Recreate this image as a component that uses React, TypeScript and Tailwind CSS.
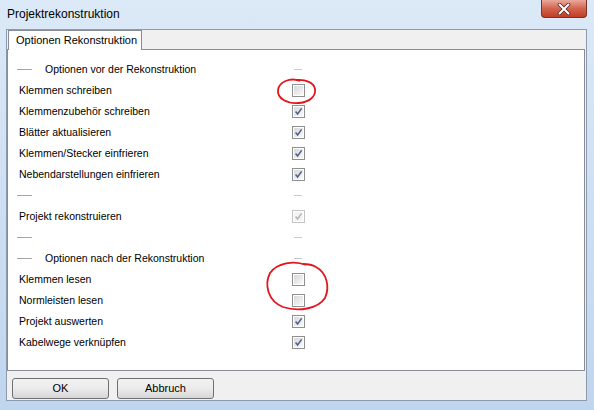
import React from "react";

type Row =
  | { kind: "check"; label: string; state: "off" | "on" | "disabled" }
  | { kind: "header"; label: string }
  | { kind: "sep" };

const rows: Row[] = [
  { kind: "header", label: "Optionen vor der Rekonstruktion" },
  { kind: "check", label: "Klemmen schreiben", state: "off" },
  { kind: "check", label: "Klemmenzubehör schreiben", state: "on" },
  { kind: "check", label: "Blätter aktualisieren", state: "on" },
  { kind: "check", label: "Klemmen/Stecker einfrieren", state: "on" },
  { kind: "check", label: "Nebendarstellungen einfrieren", state: "on" },
  { kind: "sep" },
  { kind: "check", label: "Projekt rekonstruieren", state: "disabled" },
  { kind: "sep" },
  { kind: "header", label: "Optionen nach der Rekonstruktion" },
  { kind: "check", label: "Klemmen lesen", state: "off" },
  { kind: "check", label: "Normleisten lesen", state: "off" },
  { kind: "check", label: "Projekt auswerten", state: "on" },
  { kind: "check", label: "Kabelwege verknüpfen", state: "on" },
];

function CheckBox({ state }: { state: "off" | "on" | "disabled" }) {
  const disabled = state === "disabled";
  return (
    <div
      className={`w-[13px] h-[13px] border ${disabled ? "border-[#c4c4c4]" : "border-[#8e8f8f]"} bg-white p-px`}
    >
      <div
        className={`relative w-full h-full ${disabled ? "bg-[#f4f4f4]" : "bg-gradient-to-br from-[#d8d8d8] to-[#f9f9f9]"}`}
      >
        {state !== "off" && (
          <svg viewBox="0 0 9 9" className="absolute inset-0 w-full h-full">
            <path
              d="M1.6 4.6 L3.6 7 L7.6 1.4"
              fill="none"
              stroke={disabled ? "#b4b4b4" : "#4c5f8c"}
              strokeWidth="1.5"
            />
          </svg>
        )}
      </div>
    </div>
  );
}

function OptionRow({ row }: { row: Row }) {
  if (row.kind === "check") {
    return (
      <div className="h-[21px] flex items-center">
        <span className="w-[284px] pl-[11px] text-black">{row.label}</span>
        <CheckBox state={row.state} />
      </div>
    );
  }
  return (
    <div className="h-[21px] flex items-center">
      <div className="w-[284px] pl-[9px] flex items-center">
        <span className="w-[15px] h-px bg-[#a6a6a6]" />
        {row.kind === "header" && <span className="ml-[13px] text-black">{row.label}</span>}
      </div>
      <span className="ml-[2px] w-[8px] h-px bg-[#c8c8c8]" />
    </div>
  );
}

export default function App() {
  return (
    <div
      className="relative w-[594px] h-[410px] overflow-hidden bg-gradient-to-b from-[#dce9f7] via-[#cddff3] to-[#c0d5ee] flex flex-col"
      style={{ fontFamily: '"Liberation Sans", Arial, sans-serif' }}
    >
      {/* title bar */}
      <div className="h-[29px] shrink-0 flex items-center pl-[7px] pb-[1px] text-[12px] text-black">
        Projektrekonstruktion
      </div>
      <div className="absolute top-0 right-[7px] w-[46px] h-[18px] rounded-b-[4px] border border-t-0 border-[#7a3327] bg-gradient-to-b from-[#e8a99c] via-[#d2634d] to-[#c23c22] flex items-center justify-center">
        <svg viewBox="0 0 14 12" className="w-[14px] h-[12px]">
          <path d="M2.5 1.5 L11.5 10.5 M11.5 1.5 L2.5 10.5" stroke="#5a2a22" strokeWidth="3.6" strokeLinecap="round" />
          <path d="M2.5 1.5 L11.5 10.5 M11.5 1.5 L2.5 10.5" stroke="#ffffff" strokeWidth="2" strokeLinecap="round" />
        </svg>
      </div>

      {/* client area */}
      <div className="ml-[6px] w-[581px] h-[372px] border border-[#8d9aab] bg-[#f0f0f0] flex flex-col text-[10.5px]">
        <div className="h-[19px] shrink-0 flex items-end pl-[1px]">
          <div className="relative z-10 w-[134px] h-[20px] -mb-px border border-b-0 border-[#898c95] bg-white pl-[7px] flex items-center text-black text-[11px]">
            Optionen Rekonstruktion
          </div>
        </div>
        <div className="w-[578px] h-[322px] border border-[#898c95] bg-white pt-[9px]">
          {rows.map((r, i) => (
            <OptionRow key={i} row={r} />
          ))}
        </div>
        <div className="flex gap-[8px] pl-[5px] pt-[7px]">
          <button className="w-[97px] h-[21px] rounded-[3px] border border-[#707070] bg-gradient-to-b from-[#f2f2f2] via-[#ebebeb] to-[#d6d6d6] text-black text-[11px]">
            OK
          </button>
          <button className="w-[97px] h-[21px] rounded-[3px] border border-[#707070] bg-gradient-to-b from-[#f2f2f2] via-[#ebebeb] to-[#d6d6d6] text-black text-[11px]">
            Abbruch
          </button>
        </div>
      </div>

      {/* hand-drawn red marks */}
      <svg className="absolute inset-0 pointer-events-none" width="594" height="410">
        <path
          d="M300 81 C290 77 279 82 278 90 C277 99 288 104 299 103 C310 102 316 96 315 89 C314 83 306 79 296 80"
          fill="none"
          stroke="#e3141b"
          strokeWidth="1.8"
        />
        <path
          d="M306 265 C294 260 277 263 270 273 C264 285 268 301 283 307 C298 312 318 309 325 298 C330 287 327 273 316 267 C311 264 307 264 303 264"
          fill="none"
          stroke="#e3141b"
          strokeWidth="1.8"
        />
      </svg>
    </div>
  );
}
